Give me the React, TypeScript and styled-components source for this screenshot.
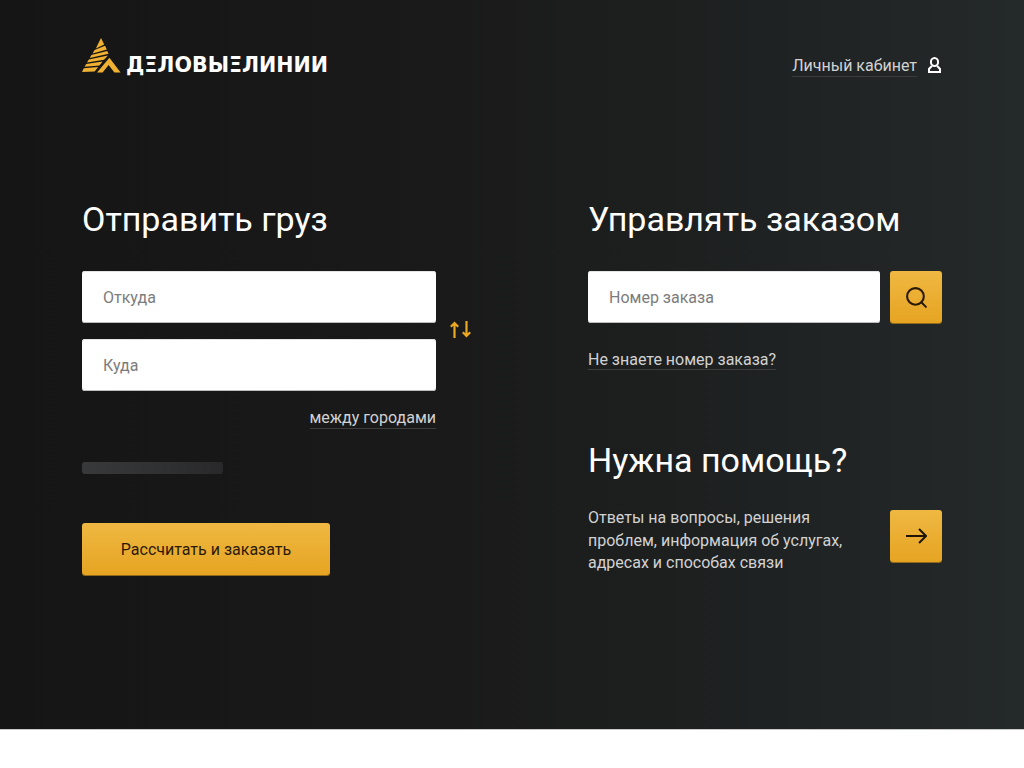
import * as React from "react";
import styled, { createGlobalStyle } from "styled-components";
import { Search } from "lucide-react";

const GlobalStyle = createGlobalStyle`
  html, body {
    margin: 0;
    padding: 0;
    background: #fff;
    font-family: Roboto, "Liberation Sans", sans-serif;
  }
  * {
    box-sizing: border-box;
  }
`;

const App = () => {
  return (
    <>
      <GlobalStyle />
      <Hero>
        <Header>
          <LogoLink href="#">
            <LogoMark />
            <LogoTxt>ДΞЛОВЫΞЛИНИИ</LogoTxt>
          </LogoLink>
          <Account href="#">
            <DottedLink>Личный кабинет</DottedLink>
            <UserIcon />
          </Account>
        </Header>
        <Columns>
          <section>
            <Title>Отправить груз</Title>
            <RouteRow>
              <Fields>
                <Input placeholder="Откуда" />
                <Input placeholder="Куда" />
              </Fields>
              <SwapIcon />
            </RouteRow>
            <RouteMode>
              <DottedLink>между городами</DottedLink>
            </RouteMode>
            <Skeleton />
            <CalcButton type="button">Рассчитать и заказать</CalcButton>
          </section>
          <section>
            <Title>Управлять заказом</Title>
            <OrderRow>
              <Input placeholder="Номер заказа" />
              <SquareButton type="button" aria-label="Найти">
                <Search size={25} strokeWidth={2} />
              </SquareButton>
            </OrderRow>
            <OrderHint>
              <DottedLink>Не знаете номер заказа?</DottedLink>
            </OrderHint>
            <HelpTitle>Нужна помощь?</HelpTitle>
            <HelpRow>
              <HelpText>
                Ответы на вопросы, решения
                <br />
                проблем, информация об услугах,
                <br />
                адресах и способах связи
              </HelpText>
              <SquareButton type="button" aria-label="Помощь">
                <ArrowIcon />
              </SquareButton>
            </HelpRow>
          </section>
        </Columns>
      </Hero>
    </>
  );
};

const LogoMark = () => (
  <svg width="39" height="36" viewBox="0 0 39 36" aria-hidden="true">
    <g fill="#f0b133">
      <path d="M19 0 L22.2 6.4 L13.8 10.6 Z" />
      <path d="M12.6 12 L23 7.8 L24.8 11.4 L10.6 15.4 Z" />
      <path d="M9.4 17 L25.2 13 L26.6 15.8 L7.8 20 Z" />
      <path d="M6.8 21.4 L26 17.4 L22 21.8 L5 24.6 Z" />
      <path d="M4.2 26 L20.6 23.4 L17.4 27.4 L2.6 28.8 Z" />
      <path d="M1.8 30.2 L16.2 29 L12.6 33.6 L0 34 Z" />
      <path d="M15 34.4 L27.4 19.8 L38.6 34.4 L32.4 34.4 L26.6 27 L20.6 34.4 Z" />
    </g>
  </svg>
);

const UserIcon = () => (
  <UserSvg width="15" height="16" viewBox="0 0 15 16" aria-hidden="true">
    <g fill="none" stroke="#fff" strokeWidth="2">
      <ellipse cx="7.5" cy="5" rx="3.6" ry="4" />
      <path d="M4.8 9 L2 12 V15 H13 V12 L10.2 9" />
    </g>
  </UserSvg>
);

const ArrowIcon = () => (
  <svg width="21" height="16" viewBox="0 0 21 16" aria-hidden="true">
    <path d="M0 8H19.5M13 1L20 8L13 15" fill="none" stroke="#1f1405" strokeWidth="2" />
  </svg>
);

const SwapIcon = () => (
  <SwapSvg width="21" height="17" viewBox="0 0 21 17" aria-hidden="true">
    <path
      d="M4.5 17V2M0.8 5.8L4.5 2L8.2 5.8M16.5 0V15M12.8 11.2L16.5 15L20.2 11.2"
      fill="none"
      stroke="#eba823"
      strokeWidth="2.2"
    />
  </SwapSvg>
);

const Hero = styled.main`
  height: 730px;
  padding: 38px 82px 0;
  background: linear-gradient(90deg, #151515 0%, #1a1a1a 45%, #1f2222 75%, #242929 100%);
  border-bottom: 1px solid #c9c9c9;
`;

const Header = styled.header`
  display: flex;
  justify-content: space-between;
  align-items: flex-start;
  height: 37px;
`;

const LogoLink = styled.a`
  display: flex;
  align-items: flex-end;
  gap: 5px;
  color: #fff;
  text-decoration: none;
`;

const LogoTxt = styled.span`
  font-family: "DejaVu Sans", sans-serif;
  font-size: 20.6px;
  font-weight: 700;
  line-height: 20px;
  white-space: nowrap;
  margin-bottom: -1px;
`;

const Account = styled.a`
  display: flex;
  align-items: center;
  gap: 10px;
  margin-top: 18px;
  text-decoration: none;
`;

const UserSvg = styled.svg`
  margin-bottom: 3px;
`;

const DottedLink = styled.span`
  font-size: 16px;
  line-height: 20px;
  color: #d2d2d2;
  border-bottom: 1px solid #3c3c3c;
`;

const Columns = styled.div`
  display: grid;
  grid-template-columns: 506px 354px;
  margin-top: 125px;
`;

const Title = styled.h2`
  margin: 0;
  font-size: 34px;
  font-weight: 400;
  line-height: 39px;
  color: #fff;
`;

const RouteRow = styled.div`
  display: flex;
  align-items: center;
  margin-top: 32px;
`;

const Fields = styled.div`
  display: flex;
  flex-direction: column;
  gap: 16px;
  width: 354px;
`;

const Input = styled.input`
  width: 100%;
  height: 52px;
  padding: 0 21px;
  border: 0;
  border-radius: 3px;
  background: #fff;
  box-shadow: inset 0 -1px 0 #bdbdbd, inset 0 1px 0 #e4e4e4;
  font-family: inherit;
  font-size: 16px;
  outline: none;

  &::placeholder {
    color: #7c7c7c;
    opacity: 1;
  }
`;

const SwapSvg = styled.svg`
  flex: none;
  margin: 0 0 3px 14px;
`;

const RouteMode = styled.div`
  display: flex;
  justify-content: flex-end;
  width: 354px;
  margin-top: 17px;
`;

const Skeleton = styled.div`
  width: 141px;
  height: 12px;
  margin-top: 33px;
  border-radius: 3px;
  background: linear-gradient(90deg, #38393b 0%, #2f3032 60%, #29292b 100%);
`;

const YellowButton = styled.button`
  border: 0;
  border-radius: 3px;
  background: linear-gradient(180deg, #efb842 0%, #e6a422 100%);
  box-shadow: 0 1px 0 #8f6a1c;
  color: #2a1a05;
  font-family: inherit;
  cursor: pointer;
`;

const CalcButton = styled(YellowButton)`
  display: block;
  width: 248px;
  height: 52px;
  margin-top: 49px;
  font-size: 16px;
`;

const SquareButton = styled(YellowButton)`
  display: flex;
  flex: none;
  align-items: center;
  justify-content: center;
  width: 52px;
  height: 52px;
`;

const OrderRow = styled.div`
  display: flex;
  gap: 10px;
  margin-top: 32px;
`;

const OrderHint = styled.div`
  margin-top: 27px;
`;

const HelpTitle = styled(Title)`
  margin-top: 71px;
`;

const HelpRow = styled.div`
  display: flex;
  justify-content: space-between;
  align-items: flex-start;
  margin-top: 30px;
`;

const HelpText = styled.p`
  margin: -3px 0 0;
  font-size: 16px;
  line-height: 22.5px;
  color: #d2d2d2;
`;

export default App;
